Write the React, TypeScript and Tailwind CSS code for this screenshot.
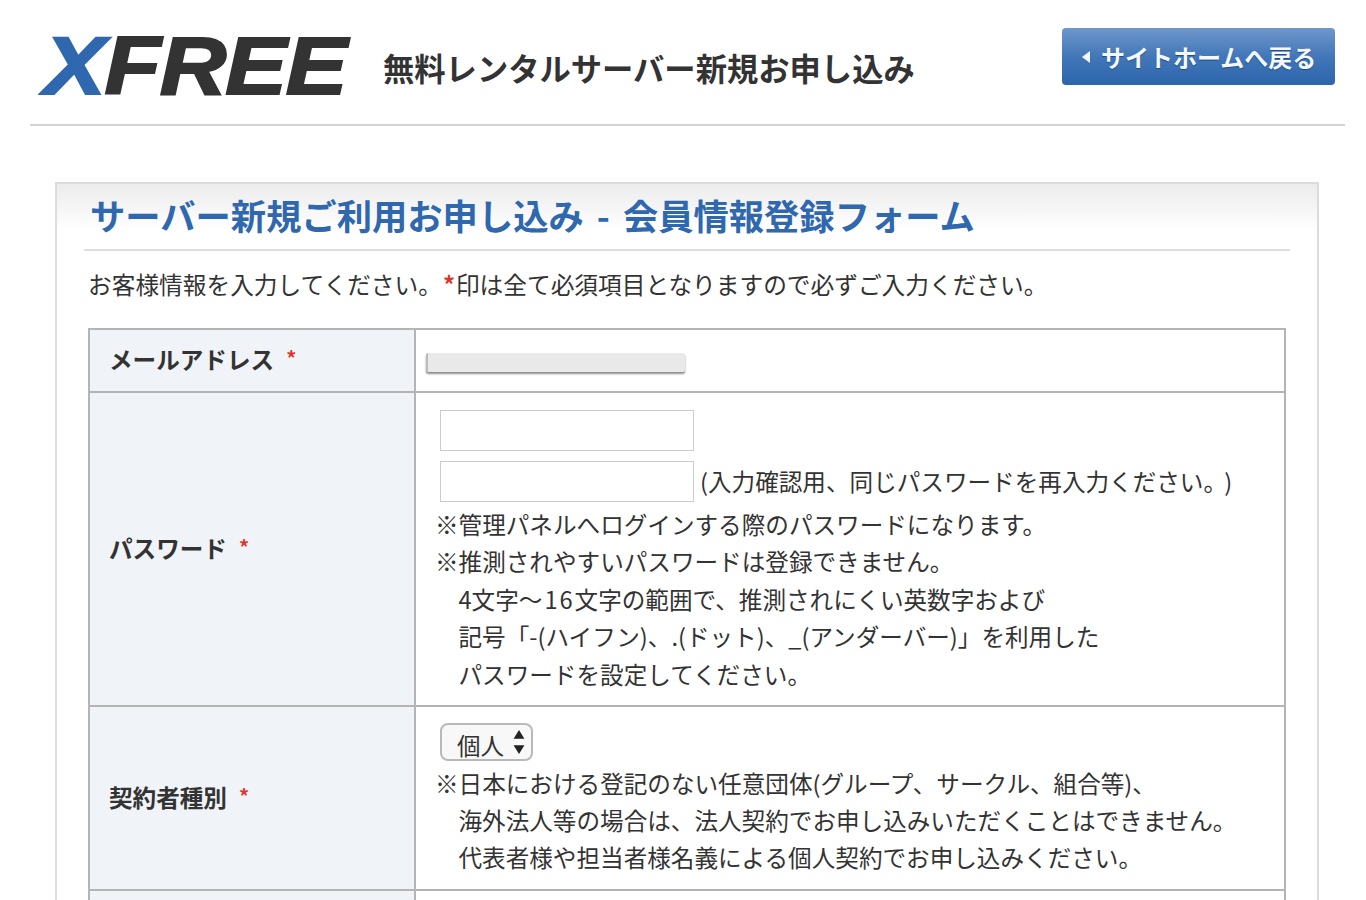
const cjk = "font-['Helvetica_Neue','Noto_Sans_CJK_JP','Liberation_Sans',sans-serif]";

function Required() {
  return <span className="ml-3 align-[3px] text-[20px] font-bold text-[#e0352b]">*</span>;
}

function Th({ label }: { label: string }) {
  return (
    <th className="w-[326px] border-2 border-[#b4b4b4] bg-[#f0f3f7] pb-[1px] pl-[19px] text-left text-[23.6px] font-bold text-[#333]">
      {label}
      <Required />
    </th>
  );
}

function TextBox() {
  return <input type="password" className="h-[41px] w-[254px] border border-[#cccccc] bg-white" />;
}

export default function App() {
  return (
    <div className={`h-[900px] overflow-hidden bg-white text-[#333] ${cjk}`}>
      {/* Header */}
      <div className="mr-[21px] ml-[30px] flex h-[126px] items-start border-b-2 border-[#d2d2d2]">
        <div className="mt-[20px] ml-[14px] w-[308px] whitespace-nowrap font-['Liberation_Sans'] text-[81px] leading-[92px] font-bold italic">
          <span className="inline-block origin-left scale-x-[1.14] tracking-[-1px]">
            <span className="text-[#2f68ae] [-webkit-text-stroke:2px_#2f68ae]">X</span>
            <span className="text-[#333333] [-webkit-text-stroke:2px_#333333]">FREE</span>
          </span>
        </div>
        <h1 className="mt-[44px] ml-[31px] text-[31.3px] leading-[48px] font-bold whitespace-nowrap text-[#333]">
          無料レンタルサーバー新規お申し込み
        </h1>
        <a className="mt-[28px] mr-[10px] ml-auto flex h-[57px] w-[273px] items-center rounded-[4px] bg-gradient-to-b from-[#6f97cc] via-[#4277b8] via-50% to-[#2c65ad] pl-[18px] text-[24px] font-bold whitespace-nowrap text-[#f4f7fb] [text-shadow:0_1px_1px_#1d4a85]">
          <svg width="12" height="14" viewBox="0 0 12 14" className="mr-[9px]">
            <path d="M10 1v12L2 7z" fill="#f4f7fb" />
          </svg>
          サイトホームへ戻る
        </a>
      </div>

      {/* Form card */}
      <div className="mt-[56px] mr-[47px] ml-[55px] border-2 border-[#dcdcdc] pr-[27px] pl-[27px]">
        <div className="-mx-[27px] bg-gradient-to-b from-[#ececec] to-white to-70% px-[27px]">
          <h2 className="h-[67px] border-b-2 border-[#dedede] pl-[6px] text-[35.3px] leading-[62px] font-bold whitespace-nowrap text-[#2f68ae] [word-spacing:5px]">
            サーバー新規ご利用お申し込み - 会員情報登録フォーム
          </h2>
        </div>
        <p className="mt-[14px] pl-[4px] text-[23.7px] leading-[38px] whitespace-nowrap">
          お客様情報を入力してください。<span className="mx-[1px] font-bold text-[#e0352b]">*</span>印は全て必須項目となりますので必ずご入力ください。
        </p>

        <table className="mt-[25px] ml-[4px] w-[1198px] border-collapse">
          <tbody>
            <tr className="h-[63px]">
              <Th label="メールアドレス" />
              <td className="border-2 border-[#b4b4b4] pl-[10px]">
                <div className="mt-[4px] h-[19px] w-[259px] rounded-[2px] border-l-2 border-[#bbbbbb] bg-[#e9e9e9] shadow-[0_2px_2px_#8f8f8f]" />
              </td>
            </tr>
            <tr className="h-[314px]">
              <Th label="パスワード" />
              <td className="border-2 border-[#b4b4b4] pt-[4px] pl-[19px] text-[23.6px] leading-[37.4px]">
                <div className="ml-[5px] flex flex-col gap-[10px] pt-[1px]">
                  <TextBox />
                  <div className="flex items-center whitespace-nowrap">
                    <TextBox />
                    <span className="ml-[6px]">
                      (入力確認用、同じパスワードを再入力ください。<span className="ml-[9px]">)</span>
                    </span>
                  </div>
                </div>
                <div className="mt-[4px] whitespace-nowrap">
                  <p>※管理パネルへログインする際のパスワードになります。</p>
                  <p>※推測されやすいパスワードは登録できません。</p>
                  <p className="pl-[23.5px]">
                    4文字<span className="tracking-[2px]">〜16</span>文字の範囲で、推測されにくい英数字および
                  </p>
                  <p className="pl-[23.5px]">記号「-(ハイフン)、.(ドット)、_(アンダーバー)」を利用した</p>
                  <p className="pl-[23.5px]">パスワードを設定してください。</p>
                </div>
              </td>
            </tr>
            <tr className="h-[184px]">
              <Th label="契約者種別" />
              <td className="border-2 border-[#b4b4b4] pt-[4px] pl-[19px] text-[23.6px] leading-[37.4px]">
                <div className="relative ml-[5px] w-[93px]">
                  <select className="h-[38px] w-[93px] appearance-none rounded-[8px] border-2 border-[#b9b9b9] bg-[#f8f8f8] pt-[2px] pl-[15px] text-[23.5px] text-[#333]">
                    <option>個人</option>
                  </select>
                  <svg width="14" height="26" viewBox="0 0 12 24" className="pointer-events-none absolute top-[6px] right-[7px]">
                    <path d="M6 1l5 8H1zM6 23l-5-8h10z" fill="#222" />
                  </svg>
                </div>
                <div className="whitespace-nowrap">
                  <p>※日本における登記のない任意団体(グループ、サークル、組合等)、</p>
                  <p className="pl-[23.5px]">海外法人等の場合は、法人契約でお申し込みいただくことはできません。</p>
                  <p className="pl-[23.5px]">代表者様や担当者様名義による個人契約でお申し込みください。</p>
                </div>
              </td>
            </tr>
            <tr className="h-[60px]">
              <th className="w-[326px] border-2 border-[#b4b4b4] bg-[#f0f3f7]" />
              <td className="border-2 border-[#b4b4b4]" />
            </tr>
          </tbody>
        </table>
      </div>
    </div>
  );
}
